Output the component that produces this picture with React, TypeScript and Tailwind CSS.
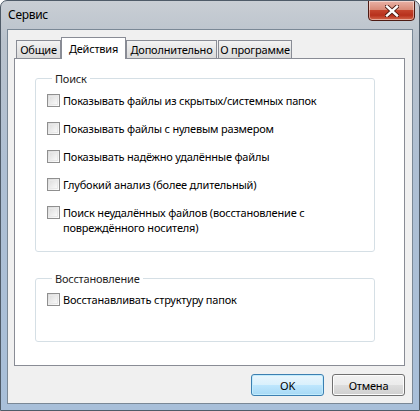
import React from "react";

const font = { fontFamily: '"Noto Sans", "Open Sans", Arial, sans-serif' };

function Check({ children }: { children: React.ReactNode }) {
  return (
    <div className="flex items-start gap-[3px]">
      <div className="mt-px h-[13px] w-[13px] shrink-0 border border-[#8f8f8f] bg-[linear-gradient(135deg,#d8d8d8,#f4f4f4_70%,#ffffff)] p-px">
        <div className="h-full w-full border border-[#e8e8e8]" />
      </div>
      <div className="leading-[15px]">{children}</div>
    </div>
  );
}

function Group({ title, children, className }: { title: string; children: React.ReactNode; className?: string }) {
  return (
    <fieldset className={"rounded-[3px] border border-[#d5dfe5] pl-[11px] pr-2 " + (className ?? "")}>
      <legend className="ml-[5px] px-[3px] leading-[15px] text-[#1e1e1e]">{title}</legend>
      {children}
    </fieldset>
  );
}

export default function App() {
  const tabBase =
    "h-[18px] whitespace-nowrap border border-b-0 border-[#898c95] bg-[linear-gradient(#f3f3f3,#e6e6e6_50%,#dadada)] flex items-center justify-center leading-none";
  return (
    <div
      style={font}
      className="relative flex h-[411px] w-[420px] flex-col overflow-hidden rounded-t-[7px] border border-[#4f5b68] bg-[linear-gradient(180deg,#c9ced4_0%,#b9c2cc_10%,#aebfd3_40%,#a8bfd9_100%)] text-[11px] tracking-[-0.2px] text-black"
    >
      {/* title bar */}
      <div className="flex h-[28px] shrink-0 items-start justify-between pl-[7px]">
        <div className="mt-[6px] text-[12px] leading-[16px] tracking-[-0.3px] text-black">Сервис</div>
        <div className="mr-[4px] mt-[-1px] flex h-[21px] w-[47px] items-center justify-center rounded-b-[4px] border border-[#4d1a12] bg-[linear-gradient(180deg,#e9b2a6_0%,#d98b78_45%,#c4432c_50%,#b7301c_75%,#d4674c_100%)] shadow-[inset_0_0_0_1px_rgba(255,255,255,0.45)]">
          <svg width="14" height="12" viewBox="0 0 14 12">
            <path d="M2 1.5 L12 10.5 M12 1.5 L2 10.5" stroke="#4a1a12" strokeWidth="4.2" strokeLinecap="square" />
            <path d="M2 1.5 L12 10.5 M12 1.5 L2 10.5" stroke="#ffffff" strokeWidth="2.4" strokeLinecap="square" />
          </svg>
        </div>
      </div>

      {/* client area */}
      <div className="mx-[6px] flex h-[375px] flex-col border border-[#7a8896] bg-[#f0f0f0] pl-[6px] pr-[7px] pt-[7px]">
        {/* tabs */}
        <div className="flex h-[21px] items-end pl-[2px]">
          <div className={tabBase + " w-[45px]"}>Общие</div>
          <div className="relative z-10 -mb-px flex h-[22px] w-[65px] items-start justify-center whitespace-nowrap border border-b-0 border-[#898c95] bg-white pt-[3px] leading-[15px]">
            Действия
          </div>
          <div className={tabBase + " w-[91px]"}>Дополнительно</div>
          <div className={tabBase + " ml-px w-[74px]"}>О программе</div>
        </div>
        {/* panel */}
        <div className="flex h-[308px] flex-col border border-[#898c95] bg-white pl-[20px] pr-[29px] pt-[12px]">
          <Group title="Поиск" className="h-[181px]">
            <div className="flex flex-col gap-[13px] pt-[7px]">
              <Check>Показывать файлы из скрытых/системных папок</Check>
              <Check>Показывать файлы с нулевым размером</Check>
              <Check>Показывать надёжно удалённые файлы</Check>
              <Check>Глубокий анализ (более длительный)</Check>
              <Check>
                Поиск неудалённых файлов (восстановление с<br />
                повреждённого носителя)
              </Check>
            </div>
          </Group>
          <Group title="Восстановление" className="mt-[19px] h-[71px]">
            <div className="pt-[6px]">
              <Check>Восстанавливать структуру папок</Check>
            </div>
          </Group>
        </div>
        {/* buttons */}
        <div className="flex justify-end gap-[8px] pt-[8px]">
          <button className="flex h-[22px] w-[73px] items-center justify-center rounded-[3px] border border-[#3c7fb1] bg-[linear-gradient(180deg,#eaf6fd_0%,#d9f0fc_50%,#bee6fd_51%,#a7d9f5_100%)] shadow-[inset_0_0_0_1px_#c2ecfd] leading-none">
            OK
          </button>
          <button className="flex h-[22px] w-[73px] items-center justify-center rounded-[3px] border border-[#707070] bg-[linear-gradient(180deg,#f2f2f2_0%,#ebebeb_50%,#dddddd_51%,#cfcfcf_100%)] shadow-[inset_0_0_0_1px_#fcfcfc] leading-none">
            Отмена
          </button>
        </div>
      </div>
    </div>
  );
}
